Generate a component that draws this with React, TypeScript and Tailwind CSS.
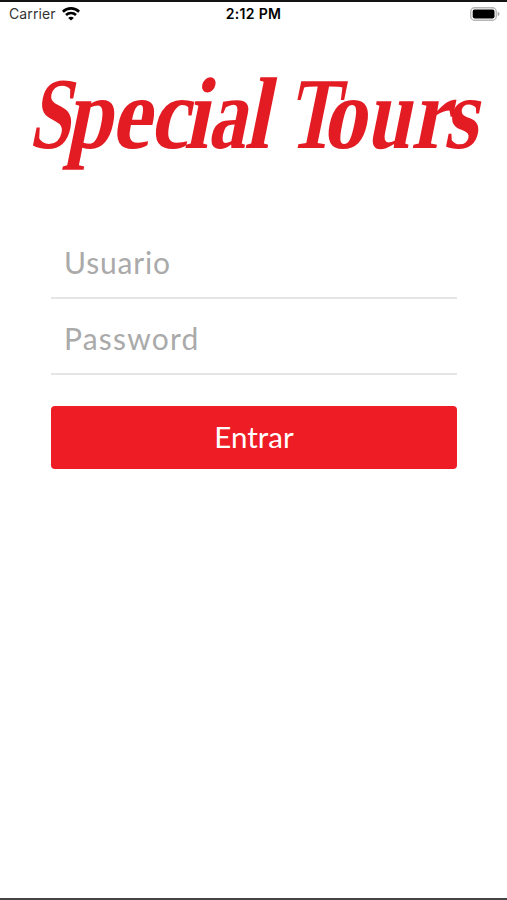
import { useState } from "react";
import type { FormEvent } from "react";

function WifiIcon() {
  return (
    <svg className="w-[18px] h-[14px]" viewBox="0 0 18 14" fill="none" stroke="#000" strokeWidth="2.6">
      <path d="M0.9 4.7C5.4 0.3 12.6 0.3 17.1 4.7" />
      <path d="M4 8c2.8-2.6 7.2-2.6 10 0" />
      <path d="M9 13.5 6.2 10.9c1.5-1.5 4.1-1.5 5.6 0z" fill="#000" stroke="none" />
    </svg>
  );
}

function BatteryIcon() {
  return (
    <svg className="w-[30px] h-[14px]" viewBox="0 0 30 14">
      <rect x="0.75" y="0.75" width="25.5" height="12.5" rx="3.8" fill="#fff" stroke="#b5b5b5" strokeWidth="1.3" />
      <rect x="2.7" y="2.6" width="21.8" height="8.8" rx="1.8" fill="#000" />
      <path d="M27.7 4.8v4.4c1.1-.4 1.8-1.2 1.8-2.2s-.7-1.8-1.8-2.2z" fill="#a6a6a6" />
    </svg>
  );
}

function StatusBar() {
  return (
    <div className="grid grid-cols-3 items-center h-[26px] border-t-2 border-[#151315] pl-[9px] pr-[9px] font-['Inter',sans-serif] text-black">
      <div className="flex items-center gap-[6px]">
        <span className="text-[14px] leading-none text-[#333] tracking-[0.1px]">Carrier</span>
        <WifiIcon />
      </div>
      <span className="text-center text-[14px] leading-none font-semibold tracking-[0.3px]">2:12 PM</span>
      <div className="flex justify-end -mr-[2px]">
        <BatteryIcon />
      </div>
    </div>
  );
}

// letters of the wordmark: [char, left edge, width]
const LETTERS: [string, number, number][] = [
  ["S", 28.5, 41],
  ["p", 65.5, 46],
  ["e", 110.5, 39.5],
  ["c", 149, 39],
  ["i", 183.5, 24.5],
  ["a", 207, 38.5],
  ["l", 244, 25],
  [" ", 270, 15],
  ["T", 286.5, 49],
  ["o", 321.5, 44],
  ["u", 366, 44],
  ["r", 410.5, 38],
  ["s", 443, 34],
];

function Logo() {
  return (
    <svg
      className="block w-full h-[124px] overflow-visible font-['Liberation_Serif',serif] font-bold"
      viewBox="0 0 507 124"
      fill="#e31b23"
      fontSize="102"
    >
      <text transform="translate(0 98) skewX(-11.5)" xmlSpace="preserve">
        {LETTERS.map(([char, x, width]) => (
          <tspan key={x} x={x} textLength={width} lengthAdjust="spacingAndGlyphs">{char}</tspan>
        ))}
      </text>
    </svg>
  );
}

export default function App() {
  const [user, setUser] = useState("");
  const [password, setPassword] = useState("");

  const handleSubmit = (e: FormEvent) => {
    e.preventDefault();
  };

  return (
    <div className="flex flex-col w-full h-[900px] bg-white border-b-2 border-[#444] overflow-hidden">
      <StatusBar />
      <div className="pt-6">
        <Logo />
      </div>

      <form
        onSubmit={handleSubmit}
        className="flex flex-col mt-[55px] ml-[51px] mr-[50px] font-['Lato',sans-serif] text-[30px]"
      >
        <input
          type="text"
          value={user}
          onChange={(e) => setUser(e.target.value)}
          placeholder="Usuario"
          className="h-[70px] px-[13px] pb-[2px] border-b-2 border-[#e5e5e5] outline-none placeholder:text-[#aaa] tracking-[0.8px]"
        />
        <input
          type="password"
          value={password}
          onChange={(e) => setPassword(e.target.value)}
          placeholder="Password"
          className="h-[76px] px-[13px] pt-[4px] border-b-2 border-[#e5e5e5] outline-none placeholder:text-[#aaa] tracking-[1.2px]"
        />
        <button type="submit" className="mt-[31px] h-[63px] pb-px rounded-[4px] bg-[#ee1c25] text-white text-[29.5px]">
          Entrar
        </button>
      </form>
    </div>
  );
}
